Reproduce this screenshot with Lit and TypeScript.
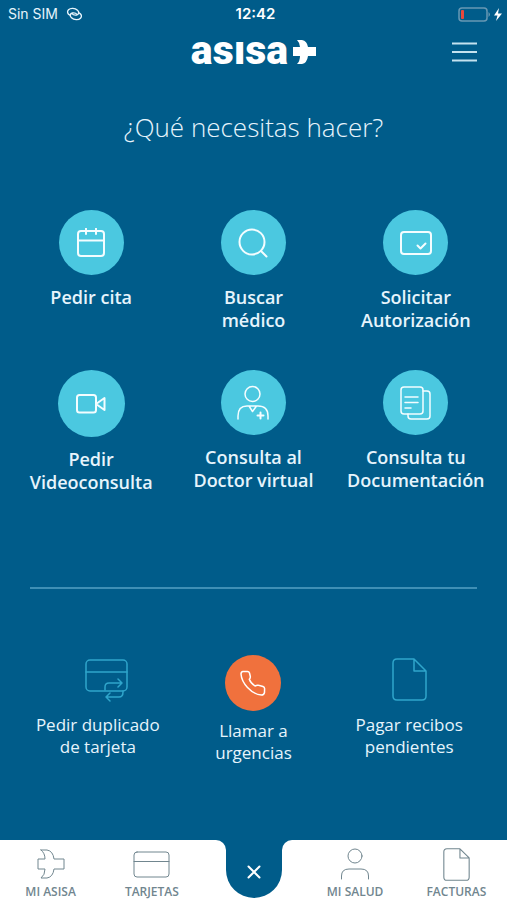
import { LitElement, html, css, svg, type TemplateResult } from "lit";
import { customElement } from "lit/decorators.js";
import { classMap } from "lit/directives/class-map.js";

interface Item {
  lines: string[];
  icon: TemplateResult;
  kind?: string;
}

const icon = (w: number, h: number, body: unknown) => html`<svg
  class="icon" width=${w} height=${h} viewBox="0 0 ${w} ${h}" aria-hidden="true">${body}</svg>`;

const documentShape = svg`<path d="M5 1H22L34 13V38Q34 42 30 42H5Q1 42 1 38V5Q1 1 5 1ZM22 1V13H34"/>`;

const actions: Item[] = [
  {
    lines: ["Pedir cita"],
    icon: icon(28, 30, svg`<rect x="1" y="3" width="26" height="25" rx="3"/><path d="M1 12.500H27M9 0.500V6M19 0.500V6"/>`),
  },
  {
    lines: ["Buscar", "médico"],
    icon: icon(30, 30, svg`<circle cx="14" cy="14" r="12.500"/><path d="M23 23L28.500 28.500"/>`),
  },
  {
    lines: ["Solicitar", "Autorización"],
    icon: icon(32, 24, svg`<rect x="1" y="1" width="30" height="22" rx="3"/><path d="M17.500 14.500L20.500 17.500L25.500 12.500"/>`),
  },
  {
    lines: ["Pedir", "Videoconsulta"],
    kind: "large",
    icon: icon(30, 20, svg`<rect x="1" y="1" width="19" height="17.500" rx="2.500"/><path d="M20 10L28.500 4V16Z"/>`),
  },
  {
    lines: ["Consulta al", "Doctor virtual"],
    kind: "person",
    icon: icon(32, 36, svg`<circle cx="15.500" cy="9" r="7.500"/><path d="M1 34V31Q1 21 10 21H21Q31 21 31 31V34M12 21L15.500 26.500L19.500 21"/><path d="M23.500 27.500V33.500M20.500 30.500H26.500" stroke-width="2"/>`),
  },
  {
    lines: ["Consulta tu", "Documentación"],
    kind: "thin",
    icon: icon(32, 34, svg`<rect x="1" y="1" width="22" height="27" rx="3"/><path d="M23 5H27Q30 5 30 8V30Q30 33 27 33H11Q8 33 8 30V28M5 11H18M5 16.500H18M5 22H11"/>`),
  },
];

const shortcuts: Item[] = [
  {
    lines: ["Pedir duplicado", "de tarjeta"],
    kind: "card",
    icon: icon(44, 44, svg`<rect x="1" y="2" width="41" height="31" rx="4"/><path d="M1 14H42M20 32V29Q20 25 24 25H37M33 21L37 25L33 29M38 33V34Q38 39 34 39H21M25 35L21 39L25 43"/>`),
  },
  {
    lines: ["Llamar a", "urgencias"],
    kind: "call",
    icon: icon(26, 26, svg`<path d="M3 1.500H7.500Q9 1.500 9.500 3L10.300 6.500Q10.500 8 9.300 9.300Q10.500 13 15 16Q17 14.800 18.500 15.300L23 16.500Q24.500 17 24.600 18.500L24.500 22.500Q24 25 21.500 25Q14 24.500 7.500 17.500Q1.500 11 1 4Q1 1.700 3 1.500Z"/>`),
  },
  {
    lines: ["Pagar recibos", "pendientes"],
    kind: "bill",
    icon: icon(35, 43, documentShape),
  },
];

const tabsLeft: Item[] = [
  {
    lines: ["MI ASISA"],
    icon: icon(28, 30, svg`<path d="M4 1H10Q16 2 17 10H27V20H17Q16 28 10 29H4Q8 26 8 20H1V10H8Q8 4 4 1Z"/>`),
  },
  {
    lines: ["TARJETAS"],
    icon: icon(37, 27, svg`<rect x="1" y="1" width="35" height="25" rx="3"/><path d="M1 10.500H36"/>`),
  },
];

const tabsRight: Item[] = [
  {
    lines: ["MI SALUD"],
    icon: icon(30, 32, svg`<circle cx="15" cy="8" r="7"/><path d="M1.500 31V28Q1.500 21 9 21H21Q28.500 21 28.500 28V31"/>`),
  },
  {
    lines: ["FACTURAS"],
    icon: html`<svg class="icon" width="27" height="33" viewBox="0 0 35 43" aria-hidden="true"><g stroke-width="1.400">${documentShape}</g></svg>`,
  },
];

@customElement("app-root")
export class AppRoot extends LitElement {
  static styles = css`
    :host {
      display: flex;
      flex-direction: column;
      min-height: 100vh;
      background: #005c8a;
      color: #e6f4fc;
      font-family: "Open Sans", "Noto Sans", sans-serif;
    }
    * { box-sizing: border-box; }
    button, a {
      font: inherit;
      color: inherit;
      background: none;
      border: 0;
      padding: 0;
      text-decoration: none;
      cursor: pointer;
    }
    svg { display: block; flex: none; }
    .icon {
      fill: none;
      stroke: currentColor;
      stroke-width: 2;
      stroke-linecap: round;
      stroke-linejoin: round;
    }
    .status, .top {
      display: grid;
      grid-template-columns: 1fr auto 1fr;
      align-items: center;
    }
    .status {
      height: 28px;
      padding: 0 4px 0 8px;
      font: 400 14px/20px Inter, sans-serif;
    }
    .carrier { display: flex; align-items: center; gap: 8px; }
    .time { font-size: 15px; font-weight: 600; color: #fff; }
    .battery { justify-self: end; }
    .top { height: 48px; padding: 0 30px; }
    .brand {
      grid-column: 2;
      display: flex;
      align-items: center;
      gap: 5px;
      color: #fff;
      font: 900 41px/44px Roboto, sans-serif;
    }
    .word { height: 48px; }
    .menu { justify-self: end; color: #c4e2ef; }
    h1 {
      margin: 31px 0 0;
      text-align: center;
      font-size: 26px;
      line-height: 40px;
      font-weight: 300;
    }
    .actions, .shortcuts {
      display: grid;
      grid-template-columns: repeat(3, 1fr);
    }
    .actions {
      padding: 0 10px;
      margin-top: 63px;
      row-gap: 38px;
      font-size: 18px;
      line-height: 23px;
      font-weight: 600;
    }
    .tile {
      display: flex;
      flex-direction: column;
      align-items: center;
      white-space: nowrap;
    }
    .line { display: block; }
    .disc {
      display: grid;
      place-items: center;
      width: 65px;
      height: 65px;
      border-radius: 50%;
      background: #4bc8e0;
      color: #f4fdff;
      margin-bottom: 11px;
    }
    .large .disc { width: 67px; height: 67px; }
    .person .icon, .thin .icon { stroke-width: 1.500; }
    .rule {
      width: calc(100% - 60px);
      height: 2px;
      margin: 93px auto 66px;
      border: 0;
      background: #3f8fb5;
    }
    .shortcuts {
      padding: 0 20px;
      font-size: 17px;
      line-height: 22px;
    }
    .shortcuts .disc {
      align-items: start;
      height: 56px;
      width: auto;
      padding-top: 3px;
      border-radius: 0;
      background: none;
      color: #2fa5cb;
      margin-bottom: 3px;
    }
    .shortcuts .icon { stroke-width: 1.500; }
    .shortcuts .card .disc { padding-left: 18px; }
    .shortcuts .call .disc {
      align-items: center;
      width: 56px;
      padding: 0;
      border-radius: 50%;
      background: #f0713d;
      color: #fff;
      margin-bottom: 9px;
    }
    .tabs {
      display: grid;
      grid-template-columns: 1fr 56px 1fr;
      height: 60px;
      margin-top: auto;
      color: #71868f;
      font-size: 12px;
      line-height: 16px;
      font-weight: 600;
    }
    .side {
      display: grid;
      grid-template-columns: 1fr 1fr;
      background: #fff;
    }
    .left { padding-right: 23px; border-top-right-radius: 10px; }
    .right { padding-left: 23px; border-top-left-radius: 10px; }
    .tab {
      display: flex;
      flex-direction: column;
      align-items: center;
      white-space: nowrap;
    }
    .tab .icon { stroke-width: 1; }
    .glyph { display: grid; place-items: center; height: 44px; padding-top: 4px; }
    .notch { background: linear-gradient(#005c8a 50%, #fff 50%); }
    .close {
      display: grid;
      place-items: center;
      width: 56px;
      height: 58px;
      padding-top: 6px;
      border-radius: 0 0 28px 28px;
      background: #005c8a;
      color: #fff;
    }
  `;

  private tile(item: Item) {
    return html`<button class=${classMap({ tile: true, [item.kind ?? "plain"]: true })}>
      <span class="disc">${item.icon}</span>
      <span>${item.lines.map((l) => html`<span class="line">${l}</span>`)}</span>
    </button>`;
  }

  private tab(item: Item) {
    return html`<a class="tab" href="#"><span class="glyph">${item.icon}</span><span>${item.lines[0]}</span></a>`;
  }

  render() {
    return html`
      <div class="status">
        <span class="carrier">Sin SIM
          <svg class="icon" width="17" height="14" viewBox="0 0 17 14" aria-hidden="true">
            <g stroke-width="1.400"><path d="M4 8.200C1.500 7 0.800 4.500 2.500 2.800C4.500 0.800 9 1 11.500 3.200C13.500 5 13 7.500 10.500 8C8.500 8.300 6.800 7.600 6 6.600"/><path d="M13 5.800C15.500 7 16.200 9.500 14.500 11.200C12.500 13.200 8 13 5.500 10.800C3.500 9 4 6.500 6.500 6C8.500 5.700 10.200 6.400 11 7.400"/></g>
          </svg>
        </span>
        <span class="time">12:42</span>
        <svg class="battery" width="45" height="16" viewBox="0 0 45 16" aria-hidden="true">
          <rect x="1" y="2" width="28" height="13" rx="3" fill="none" stroke="#6798b4" stroke-width="1.500"/>
          <rect x="3" y="4" width="3" height="9" rx="1" fill="#e8483c"/>
          <path d="M30.500 6Q33.500 8.500 30.500 11Z" fill="#6798b4"/>
          <path d="M41 2L36 9.500H39.500L38 15L44 7.500H40Z" fill="#fff"/>
        </svg>
      </div>
      <header class="top">
        <div class="brand">
          <span class="word">asısa</span>
          <svg width="23" height="24" viewBox="0 0 23 24" aria-hidden="true">
            <path d="M4 0H9Q14 1 15 7H23V16H15Q14 23 9 24H4Q7 21 7 16H0V7H7Q7 3 4 0Z" fill="#fff"/>
          </svg>
        </div>
        <button class="menu" aria-label="Menú">
          <svg width="25" height="20" viewBox="0 0 25 20"><path d="M0 1.500H25M0 10H25M0 18.500H25" stroke="currentColor" stroke-width="1.800"/></svg>
        </button>
      </header>
      <h1>¿Qué necesitas hacer?</h1>
      <main class="actions">${actions.map((a) => this.tile(a))}</main>
      <hr class="rule" />
      <section class="shortcuts">${shortcuts.map((s) => this.tile(s))}</section>
      <nav class="tabs">
        <div class="side left">${tabsLeft.map((t) => this.tab(t))}</div>
        <div class="notch">
          <button class="close" aria-label="Cerrar">
            <svg class="icon" width="14" height="14" viewBox="0 0 14 14"><path d="M1.500 1.500L12.500 12.500M12.500 1.500L1.500 12.500"/></svg>
          </button>
        </div>
        <div class="side right">${tabsRight.map((t) => this.tab(t))}</div>
      </nav>
    `;
  }
}
